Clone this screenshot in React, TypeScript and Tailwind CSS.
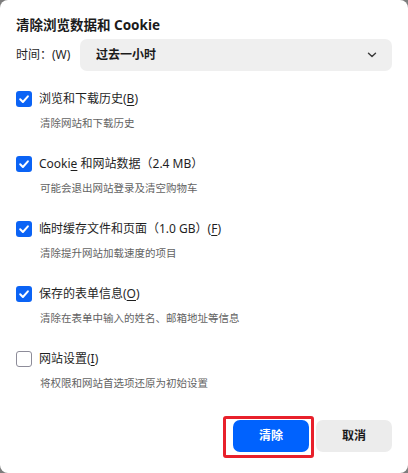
import React from 'react';

type Item = {
  label: React.ReactNode;
  desc: string;
  checked: boolean;
};

const U = ({ children }: { children: React.ReactNode }) => (
  <span className="underline underline-offset-2 decoration-1">{children}</span>
);

const items: Item[] = [
  { label: <>浏览和下载历史(<U>B</U>)</>, desc: '清除网站和下载历史', checked: true },
  { label: <>Cooki<U>e</U> 和网站数据（2.4 MB）</>, desc: '可能会退出网站登录及清空购物车', checked: true },
  { label: <>临时缓存文件和页面（1.0 GB）(<U>F</U>)</>, desc: '清除提升网站加载速度的项目', checked: true },
  { label: <>保存的表单信息(<U>O</U>)</>, desc: '清除在表单中输入的姓名、邮箱地址等信息', checked: true },
  { label: <>网站设置(<U>I</U>)</>, desc: '将权限和网站首选项还原为初始设置', checked: false },
];

const CheckBox = ({ checked }: { checked: boolean }) =>
  checked ? (
    <div className="w-4 h-4 rounded-[3px] bg-[#0b63f5] flex items-center justify-center shrink-0">
      <svg width="12" height="12" viewBox="0 0 12 12" fill="none">
        <path d="M2.2 6.3 4.9 9 9.9 3.3" stroke="white" strokeWidth="2" strokeLinecap="round" strokeLinejoin="round" />
      </svg>
    </div>
  ) : (
    <div className="w-4 h-4 rounded-[3px] border-[1.5px] border-[#8d8c99] bg-white shrink-0" />
  );

export default function App() {
  return (
    <div
      className="w-[408px] h-[473px] bg-[#7d7d7d]"
      style={{ fontFamily: '"Noto Sans", "Noto Sans CJK SC", sans-serif' }}
    >
      <div className="h-full bg-white rounded-[8px] flex flex-col px-4 pt-[15px]">
        {/* Header */}
        <h1 className="text-[13.5px] leading-5 font-bold text-[#1b1b1b]">清除浏览数据和 Cookie</h1>

        <div className="mt-1 flex items-center h-8">
          <span className="w-16 text-[12px] text-[#1f1f1f]">时间：(W)</span>
          <div className="flex-1 h-8 rounded-[7px] bg-[#efefef] flex items-center justify-between pl-4 pr-[15px]">
            <span className="text-[12px] font-bold text-[#1b1b1b]">过去一小时</span>
            <svg width="10" height="6" viewBox="0 0 10 6" fill="none">
              <path d="M1.5 1.2 5 4.6 8.5 1.2" stroke="#3a3a3a" strokeWidth="1.4" strokeLinecap="round" strokeLinejoin="round" />
            </svg>
          </div>
        </div>

        {/* Options */}
        <div className="mt-[18px] flex flex-col gap-[23px]">
          {items.map((it, i) => (
            <div key={i} className="flex flex-col">
              <div className="h-5 flex items-center gap-[7px]">
                <CheckBox checked={it.checked} />
                <span className="text-[12px] text-[#1f1f1f] whitespace-nowrap">{it.label}</span>
              </div>
              <div className="mt-[6px] leading-4 pl-6 text-[10.5px] text-[#636363]">{it.desc}</div>
            </div>
          ))}
        </div>

        {/* Actions */}
        <div className="mt-[29px] flex justify-end gap-[7px]">
          <div className="relative">
            <button className="w-[76px] h-8 rounded-[7px] bg-[#0062fe] text-white text-[12px] font-bold">清除</button>
            <div className="absolute -left-[10px] -top-[4px] w-[91px] h-[42px] border-[3px] border-[#e8202b] rounded-[3px] pointer-events-none" />
          </div>
          <button className="w-[76px] h-8 rounded-[7px] bg-[#ececec] text-[#1b1b1b] text-[12px] font-bold">取消</button>
        </div>
      </div>
    </div>
  );
}
